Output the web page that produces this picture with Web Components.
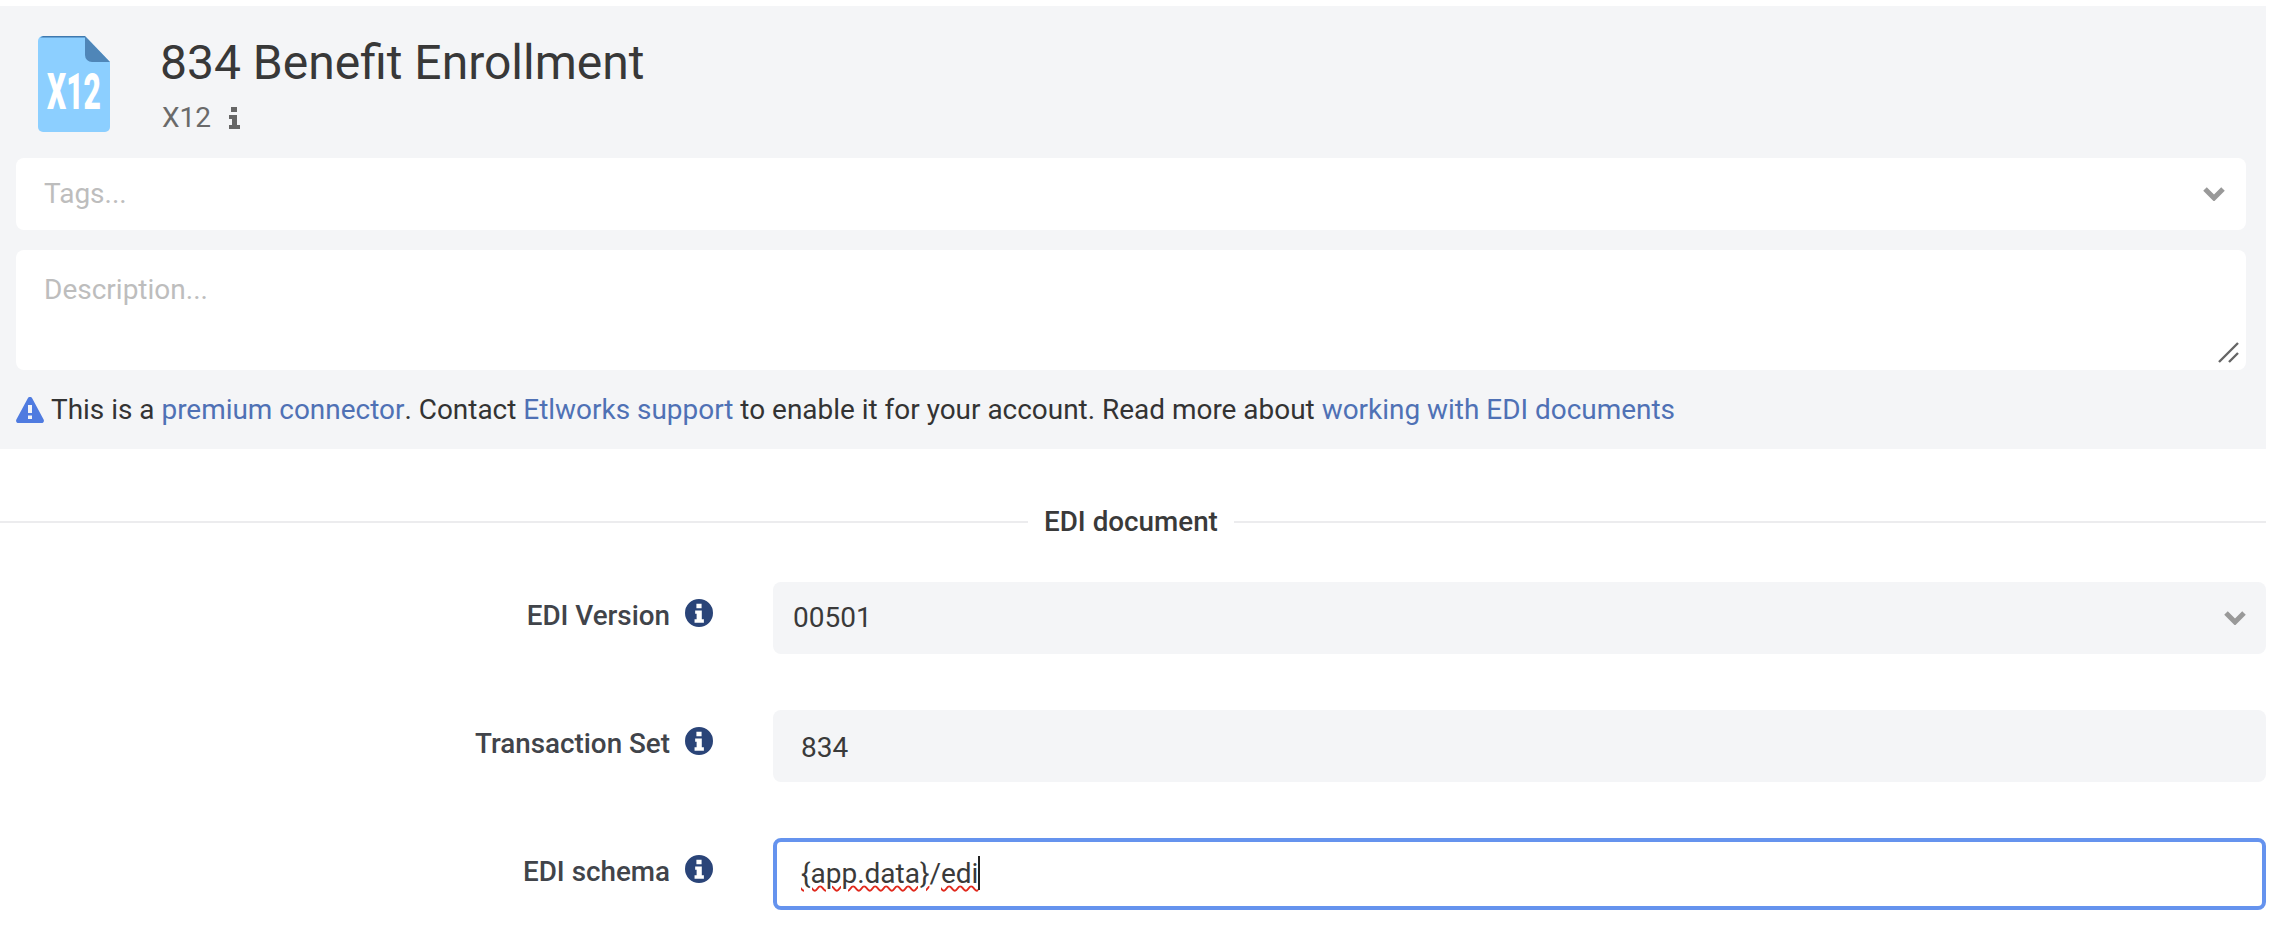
<!doctype html>
<html>
<head>
<meta charset="utf-8">
<title>834 Benefit Enrollment</title>
<style>
html, body { margin: 0; background: #fff; }
body { font: 28px/1.4 Roboto, "Liberation Sans", sans-serif; color: #2f3033; }
</style>
</head>
<body>
<et-form>
	<et-connector-head title-text="834 Benefit Enrollment" kind="X12">
		<a href="#" slot="a">premium connector</a>
		<a href="#" slot="b">Etlworks support</a>
		<a href="#" slot="c">working with EDI documents</a>
	</et-connector-head>
	<et-divider>EDI document</et-divider>
	<et-field label="EDI Version" type="select">00501</et-field>
	<et-field label="Transaction Set" indent><span class="low">834</span></et-field>
	<et-field label="EDI schema" indent focused><span class="sp">{app.data}</span>/<span class="sp">edi</span><span class="caret"></span></et-field>
</et-form>

<script>
const chevron = `<svg viewBox="0 0 22 14" width="22" height="14" aria-hidden="true"><path d="M2 2l9 9 9-9" fill="none" stroke="#999" stroke-width="5"/></svg>`;

// circle with a serif i cut out of it
const infoCircle = `<svg viewBox="0 0 27 27" width="28" height="28" aria-hidden="true"><path fill="#2a4478" fill-rule="evenodd" d="M13.500 0a13.500 13.500 0 1 0 0 27 13.500 13.500 0 0 0 0-27zM11 4.600h5v4.300h-5zM9.800 11h6.400v8.600h2v3.200H9.200v-3.200h2v-5.400H9.800z"/></svg>`;

class EtForm extends HTMLElement {
	constructor() { super();
		this.attachShadow({mode: 'open'}).innerHTML = `
		<style>
		:host { display: block; padding: 6px 8px 0 0; }
		</style>
		<slot></slot>`;
	}
}

class EtConnectorHead extends HTMLElement {
	constructor() { super();
		const title = this.getAttribute('title-text');
		const kind = this.getAttribute('kind');
		this.attachShadow({mode: 'open'}).innerHTML = `
		<style>
		:host { display: block; background: #f4f5f7; padding: 0 20px 0 16px; height: 443px; box-sizing: border-box; }
		#top { display: flex; height: 152px; padding: 30px 0 0 22px; box-sizing: border-box; }
		#icon { flex: none; width: 72px; height: 96px; }
		#names { margin-left: 50px; }
		h1 { margin: 0; font-size: 48px; font-weight: 400; line-height: 54px; color: #383838; }
		#kind { display: flex; align-items: center; gap: 18px; margin: 10px 0 0 2px; line-height: 36px; color: #6a6a6a; }
		#box { display: flex; align-items: center; justify-content: space-between; background: #fff; border-radius: 8px; height: 72px; padding: 0 21px 0 28px; color: #bdbdbd; }
		#desc { position: relative; background: #fff; border-radius: 8px; height: 120px; margin-top: 20px; padding: 20px 28px; box-sizing: border-box; color: #bdbdbd; }
		#grip { position: absolute; right: 6px; bottom: 6px; }
		#note { display: flex; align-items: center; height: 79px; white-space: pre; color: #333; font-size: 27.95px; }
		#note svg { margin-right: 7px; flex: none; }
		::slotted(a) { color: #4f71b5; text-decoration: none; }
		</style>
		<div id="top">
			<svg id="icon" viewBox="0 0 72 96">
				<path fill="#8ccfff" d="M5 0h42l25 26v65a5 5 0 0 1-5 5H5a5 5 0 0 1-5-5V5a5 5 0 0 1 5-5z"/>
				<path fill="#4f86b8" d="M47 0l25 26H54a7 7 0 0 1-7-7z"/>
				<path fill="#3f79ae" d="M5 0h42v1.500H2z"/>
				<text text-anchor="middle" font-family="Roboto" font-weight="900" font-size="50" fill="#fff" transform="translate(36 73) scale(.6 1)">X12</text>
			</svg>
			<div id="names">
				<h1>${title}</h1>
				<div id="kind">${kind}
					<svg viewBox="0 0 11 22" width="11" height="22"><path fill="#666" d="M2 0h6v5H2zM0 8h8v10h3v4H0v-4h3v-6H0z"/></svg>
				</div>
			</div>
		</div>
		<div id="box">Tags...${chevron}</div>
		<div id="desc">Description...
			<svg id="grip" viewBox="0 0 22 22" width="22" height="22"><path d="M1 20L20 1M11 20l9-9" stroke="#666" stroke-width="2.400" fill="none"/></svg>
		</div>
		<div id="note"><svg viewBox="0 0 28 26" width="28" height="26"><path fill="#4f7be0" fill-rule="evenodd" d="M14 0c1 0 1.800.5 2.300 1.400l11.300 21c.9 1.700-.2 3.600-2.200 3.600H2.600C.6 26-.5 24.100.4 22.400l11.300-21C12.200.5 13 0 14 0zM12 8v8h4V8zM12 18.500V22h4v-3.500z"/></svg>This is a <slot name="a"></slot>. Contact <slot name="b"></slot> to enable it for your account. Read more about <slot name="c"></slot></div>`;
	}
}

class EtDivider extends HTMLElement {
	constructor() { super();
		this.attachShadow({mode: 'open'}).innerHTML = `
		<style>
		:host { display: flex; align-items: center; gap: 16px; height: 42px; margin-top: 52px; font-weight: 500; font-size: 27.8px; color: #3a3a3a; }
		:host::before { content: ""; flex: none; width: 1028px; height: 2px; background: #ececee; }
		:host::after { content: ""; flex: 1; height: 2px; background: #ececee; }
		</style>
		<slot></slot>`;
	}
}

class EtField extends HTMLElement {
	constructor() { super();
		const isSelect = this.getAttribute('type') === 'select';
		this.attachShadow({mode: 'open'}).innerHTML = `
		<style>
		:host { display: flex; align-items: center; height: 72px; margin-top: 56px; }
		:host(:first-of-type) { margin-top: 39px; }
		#label { flex: none; width: 670px; text-align: right; font-weight: 500; font-size: 27.8px; color: #41444a; position: relative; top: -2px; }
		#help { flex: none; display: flex; width: 103px; padding-left: 15px; box-sizing: border-box; position: relative; top: -5px; }
		#input { flex: 1; height: 72px; box-sizing: border-box; display: flex; align-items: center; justify-content: space-between; background: #f4f5f7; border-radius: 8px; padding: 0 20px; color: #3a3a3a; }
		:host([indent]) #input { padding-left: 28px; }
		:host([focused]) #input { background: #fff; border: 4px solid #6593ee; padding-left: 24px; }
		::slotted(.sp) { text-decoration: underline wavy #e0281c 2px; text-underline-offset: 2px; }
		::slotted(.low) { position: relative; top: 2px; }
		::slotted(.caret) { display: inline-block; width: 2px; height: 34px; background: #222; vertical-align: -7px; }
		</style>
		<div id="label">${this.getAttribute('label')}</div>
		<div id="help">${infoCircle}</div>
		<div id="input"><span><slot></slot></span>${isSelect ? chevron : ''}</div>`;
	}
}

customElements.define('et-form', EtForm);
customElements.define('et-connector-head', EtConnectorHead);
customElements.define('et-divider', EtDivider);
customElements.define('et-field', EtField);
</script>
</body>
</html>
